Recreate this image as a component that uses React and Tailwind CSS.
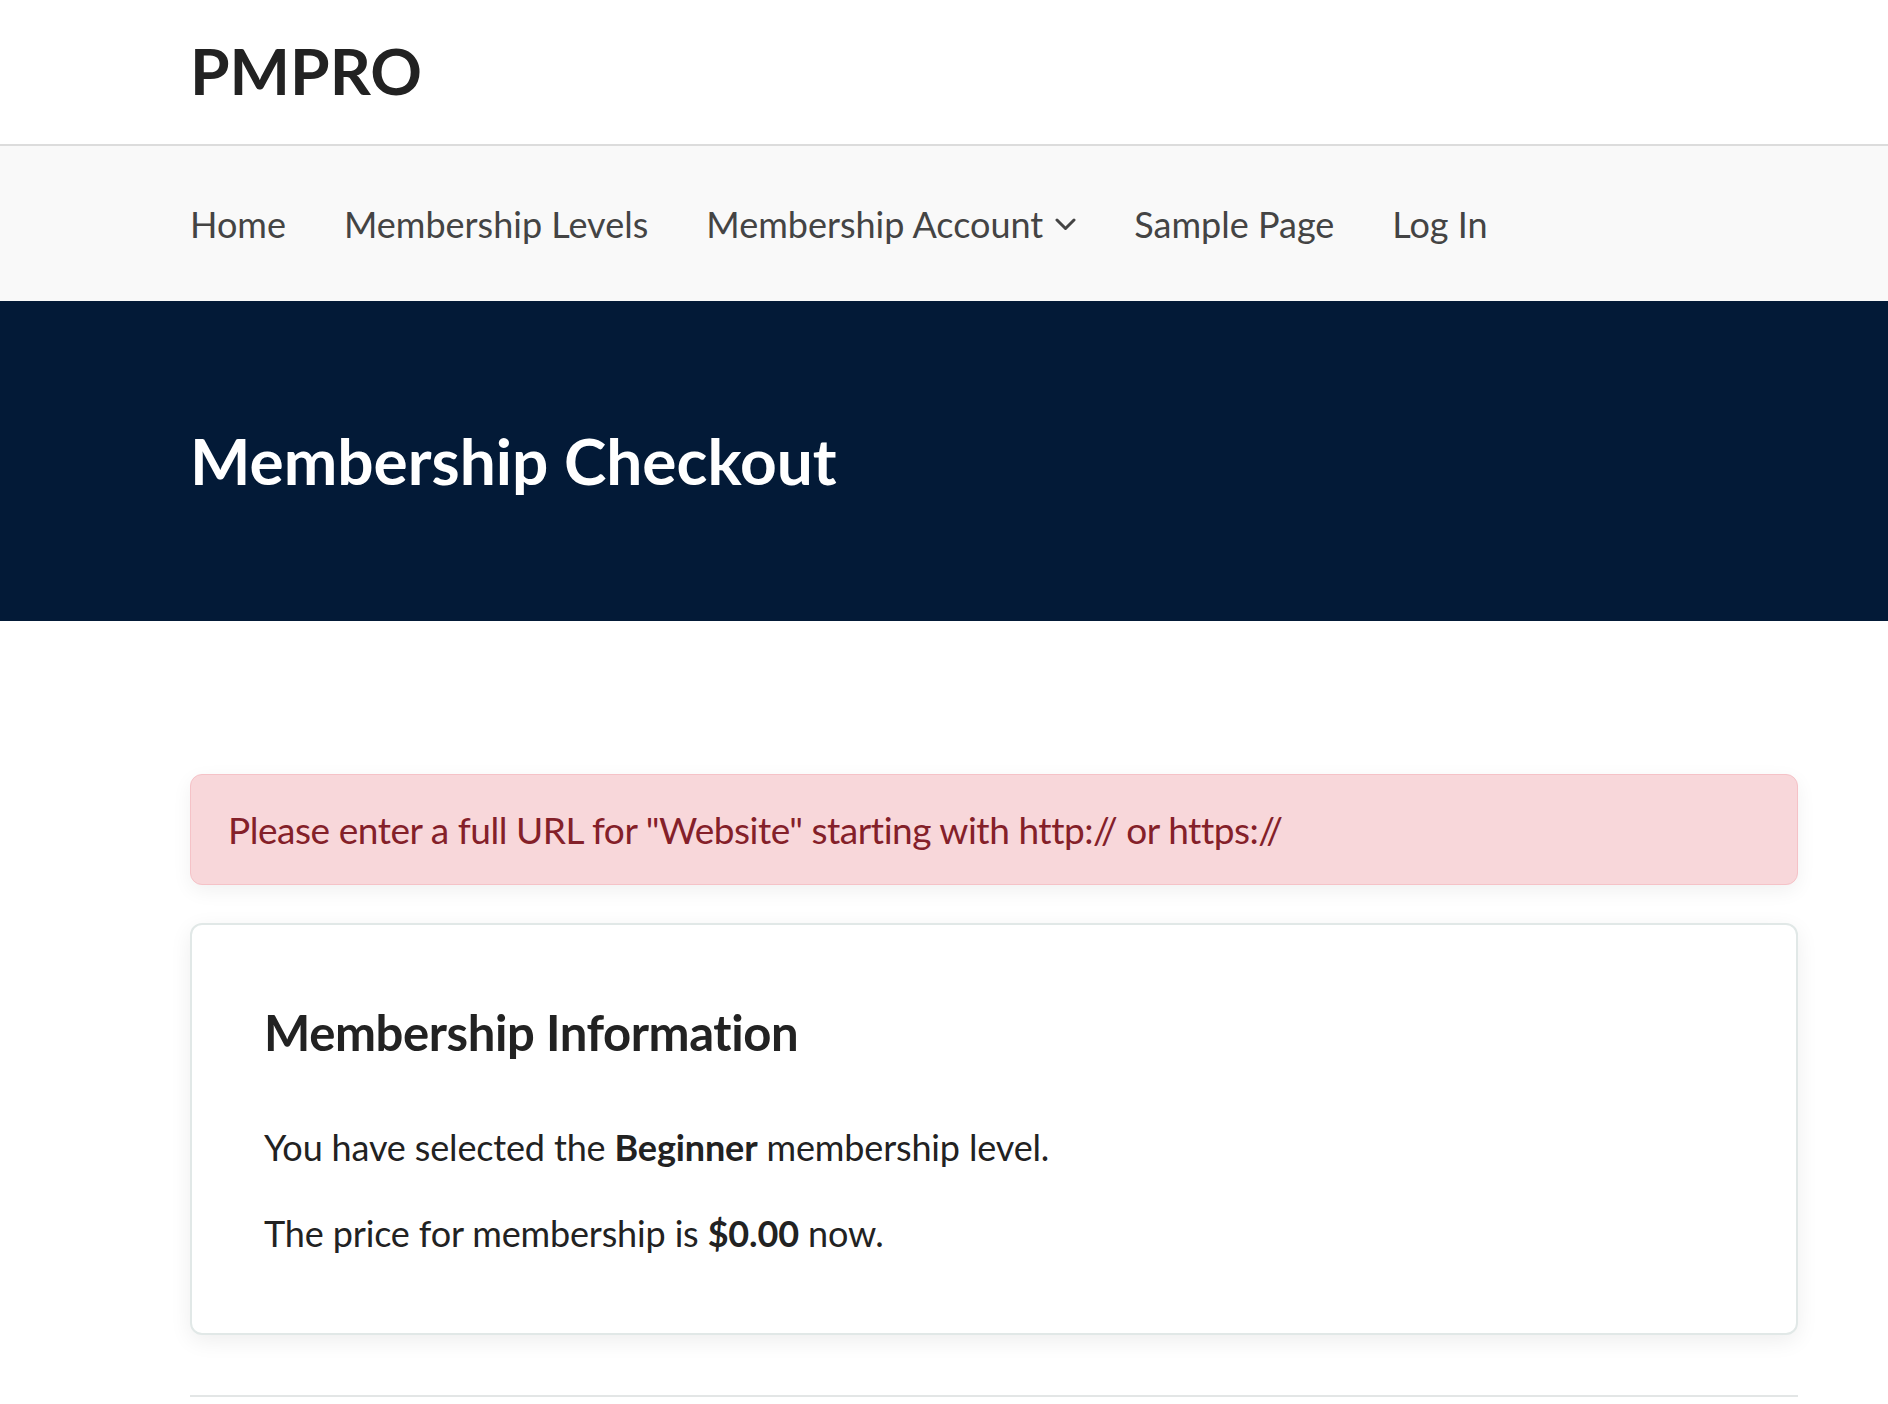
// Membership checkout page (PMPro style)

const font = { fontFamily: "Lato, 'Noto Sans', sans-serif" };

const navItems = ["Home", "Membership Levels", "Membership Account", "Sample Page", "Log In"];

function Chevron() {
  return (
    <svg width="21" height="13" viewBox="0 0 21 13" fill="none" className="ml-[12px] mt-[2px]">
      <path d="M2 2l8.5 8.5L19 2" stroke="#444" strokeWidth="3" strokeLinecap="round" strokeLinejoin="round" />
    </svg>
  );
}

export default function App() {
  return (
    <div className="min-h-[1404px] bg-white text-[#222]" style={font}>
      {/* Site header */}
      <header className="h-[146px] border-b-2 border-[#dcdcdc] box-border pt-[39px]">
        <div className="ml-[190px] text-[64px] leading-none font-bold text-[#222]">PMPRO</div>
      </header>

      {/* Main nav */}
      <nav className="h-[155px] bg-[#f9f9f9] flex items-center">
        <ul className="ml-[190px] flex items-center gap-[58px] text-[36px] leading-none text-[#444]">
          {navItems.map((item) => (
            <li key={item} className="flex items-center">
              {item}
              {item === "Membership Account" && <Chevron />}
            </li>
          ))}
        </ul>
      </nav>

      {/* Page title */}
      <div className="h-[320px] bg-[#031a37] flex items-center">
        <h1 className="ml-[190px] text-[64px] leading-none font-bold text-white">Membership Checkout</h1>
      </div>

      {/* Content */}
      <main className="ml-[190px] w-[1608px] pt-[153px]">
        <div className="h-[111px] rounded-[12px] border border-[#f5c2c7] bg-[#f8d7da] flex items-center pl-[37px] shadow-[0_6px_20px_rgba(0,0,0,0.06)]">
          <p className="text-[37px] leading-none tracking-[-0.45px] text-[#842029]">
            Please enter a full URL for "Website" starting with http:// or https://
          </p>
        </div>

        <div className="mt-[38px] h-[412px] rounded-[12px] border-2 border-[#e1e8e7] bg-white px-[72px] pt-[83px] shadow-[0_6px_22px_rgba(0,0,0,0.07)]">
          <h2 className="text-[49px] leading-none font-bold tracking-[-0.4px] text-[#222]">Membership Information</h2>
          <p className="mt-[72px] text-[36px] leading-none tracking-[-0.15px] text-[#222]">
            You have selected the <strong className="font-bold">Beginner</strong> membership level.
          </p>
          <p className="mt-[50px] text-[36px] leading-none tracking-[-0.15px] text-[#222]">
            The price for membership is <strong className="font-bold">$0.00</strong> now.
          </p>
        </div>

        <div className="mt-[60px] border-t-2 border-[#e3e6e6]" />
      </main>
    </div>
  );
}
